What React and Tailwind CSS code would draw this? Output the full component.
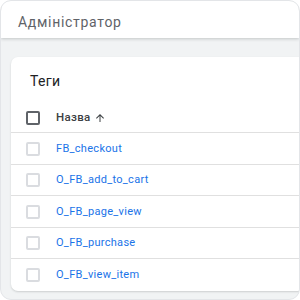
const tags = ['FB_checkout', 'O_FB_add_to_cart', 'O_FB_page_view', 'O_FB_purchase', 'O_FB_view_item']

export default function App() {
  return (
    <div className="w-[300px] h-[300px] bg-white" style={{ fontFamily: 'Roboto, "Noto Sans", sans-serif' }}>
      <div className="w-full h-full rounded-[11px] border border-[#e3e5e8] overflow-hidden bg-[#f1f3f4] flex flex-col">
        {/* header */}
        <div className="h-[37px] shrink-0 bg-white flex items-center pl-[17px] pt-[5px] shadow-[0_1px_3px_rgba(60,64,67,0.25)] relative">
          <span className="text-[14px] text-[#5f6368] tracking-[0.7px]">Адміністратор</span>
        </div>

        {/* tags card */}
        <div className="mt-[19px] ml-[10px] -mr-[12px] bg-white rounded-[7px] shadow-[0_1px_2px_rgba(60,64,67,0.2)] flex flex-col">
          <div className="h-[46px] flex items-center pl-[19px] pt-[2px] text-[14px] text-[#202124] tracking-[0.3px]">Теги</div>
          <div className="h-[30px] flex items-center pl-[15px] border-b border-[#e0e0e0]">
            <div className="w-[14px] h-[14px] border-2 border-[#5f6368] rounded-[2px]" />
            <span className="ml-[16px] text-[11.5px] font-medium text-[#3c4043] tracking-[0.3px]">Назва</span>
            <svg className="ml-[4px]" width="12" height="12" viewBox="0 0 24 24" fill="#3c4043">
              <path d="M4 12l1.41 1.41L11 7.83V20h2V7.83l5.58 5.59L20 12l-8-8-8 8z" />
            </svg>
          </div>
          {tags.map((t) => (
            <div key={t} className="h-[31.5px] flex items-center pl-[15px] pt-[1px] border-b border-[#e0e0e0] last:border-b-0">
              <div className="w-[14px] h-[14px] border-2 border-[#dadce0] rounded-[2px]" />
              <span className="ml-[16px] text-[11px] text-[#1a73e8] tracking-[0.3px]">{t}</span>
            </div>
          ))}
        </div>
      </div>
    </div>
  )
}
